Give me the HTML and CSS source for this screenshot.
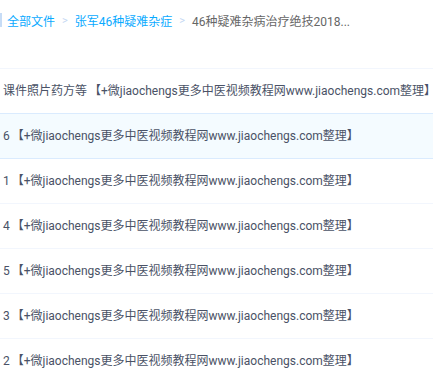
FILE: index.html
```html
<!DOCTYPE html>
<html lang="zh-CN">
<head>
  <meta charset="UTF-8" />
  <meta name="viewport" content="width=device-width, initial-scale=1.0"/>
  <title>全部文件</title>
  <link rel="stylesheet" href="styles.css">
</head>
<body>
  <div class="crumbs">
    <span class="crumb-bar"></span>
    <a href="#">全部文件</a>
    <span class="sep">&gt;</span>
    <a href="#">张军46种疑难杂症</a>
    <span class="sep">&gt;</span>
    <span class="current">46种疑难杂病治疗绝技2018...</span>
  </div>
  <ul class="file-list">
    <li class="row">课件照片药方等 【+微jiaochengs更多中医视频教程网www.jiaochengs.com整理】</li>
    <li class="row hover">6 【+微jiaochengs更多中医视频教程网www.jiaochengs.com整理】</li>
    <li class="row">1 【+微jiaochengs更多中医视频教程网www.jiaochengs.com整理】</li>
    <li class="row">4 【+微jiaochengs更多中医视频教程网www.jiaochengs.com整理】</li>
    <li class="row">5 【+微jiaochengs更多中医视频教程网www.jiaochengs.com整理】</li>
    <li class="row">3 【+微jiaochengs更多中医视频教程网www.jiaochengs.com整理】</li>
    <li class="row">2 【+微jiaochengs更多中医视频教程网www.jiaochengs.com整理】</li>
  </ul>
</body>
</html>
```

FILE: styles.css
```css
body {
  margin: 0;
  padding: 0;
  background: #fff;
  color: #4a5266;
  font-family: 'Roboto', 'Noto Sans CJK SC', sans-serif;
  font-size: 12px;
  overflow: hidden;
}
/* --- パンくず --- */
.crumbs {
  display: flex;
  align-items: center;
  height: 40px;
  white-space: nowrap;
}
.crumb-bar {
  width: 2px;
  height: 14px;
  background: #c7dcf6;
  margin: 0 5px 0 0;
}
.crumbs a {
  color: #09aaff;
  text-decoration: none;
}
.crumbs .sep {
  color: #c5d8f3;
  margin: 0 7px;
  font-size: 11px;
}
.crumbs .current {
  color: #666;
}
/* --- ファイル一覧 --- */
.file-list {
  list-style: none;
  margin: 28px 0 0 0;
  padding: 0;
  border-top: 1px solid #f2f6fd;
}
.row {
  height: 44px;
  line-height: 44px;
  padding-left: 3px;
  white-space: nowrap;
  border-bottom: 1px solid #f2f6fd;
  word-spacing: -1px;
}
.row.hover {
  background: #f4fbff;
  border-bottom-color: #daebfe;
  margin-top: -1px;
  border-top: 1px solid #daebfe;
}
```
